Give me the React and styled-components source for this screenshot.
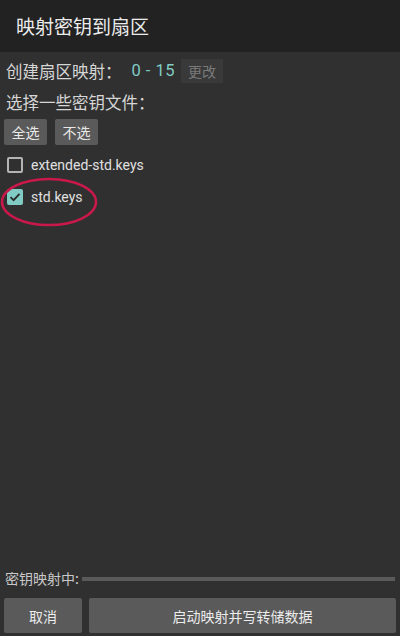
import React from "react";
import styled, { createGlobalStyle } from "styled-components";

const Global = createGlobalStyle`
  html, body { margin: 0; padding: 0; background: #303030; }
  body { font-family: "Noto Sans CJK SC", "Noto Sans", Roboto, sans-serif; }
  * { box-sizing: border-box; }
`;

const Screen = styled.div`
  width: 400px;
  height: 636px;
  display: flex;
  flex-direction: column;
  background: #303030;
  color: #d6d6d6;
`;

const Header = styled.div`
  height: 52px;
  flex-shrink: 0;
  background: #222222;
  display: flex;
  align-items: center;
  padding: 0 0 2px 16px;
  font-size: 19px;
  color: #ececec;
`;

const Body = styled.div`
  flex: 1;
  display: flex;
  flex-direction: column;
  padding: 7px 4px 0 6px;
`;

const Line = styled.div`
  display: flex;
  align-items: center;
  height: ${(p) => p.$h || 24}px;
  margin-top: ${(p) => p.$mt || 0}px;
  font-size: 16.5px;
  line-height: 1;
`;

const Accent = styled.span`
  color: #80cbc4;
  margin-left: 10px;
  font-family: Roboto, "Noto Sans", sans-serif;
  letter-spacing: 0.5px;
`;

const GhostBtn = styled.span`
  margin-left: 6px;
  width: 42px;
  height: 24px;
  display: flex;
  align-items: center;
  justify-content: center;
  background: #393939;
  color: #7a7a7a;
  font-size: 14px;
`;

const BtnRow = styled.div`
  display: flex;
  gap: 8px;
  margin-top: 5px;
  margin-left: -2px;
`;

const SmallBtn = styled.button`
  width: 43px;
  height: 26px;
  border: none;
  border-radius: 2px;
  background: #5a5a5a;
  color: #e8e8e8;
  font-family: inherit;
  font-size: 14px;
  padding: 0;
`;

const List = styled.div`
  display: flex;
  flex-direction: column;
  margin-top: 4px;
`;

const Item = styled.div`
  position: relative;
  display: flex;
  align-items: center;
  height: 32px;
  padding-left: 1px;
  font-family: Roboto, "Noto Sans", sans-serif;
  font-size: 14px;
  color: #e0e0e0;
`;

const Box = styled.span`
  width: 16px;
  height: 16px;
  border-radius: 2px;
  margin-right: 8px;
  display: flex;
  align-items: center;
  justify-content: center;
  border: ${(p) => (p.$checked ? "none" : "2px solid #b4b4b4")};
  background: ${(p) => (p.$checked ? "#80cbc4" : "transparent")};
`;

const Ring = styled.svg`
  position: absolute;
  left: -7px;
  top: -4px;
  pointer-events: none;
`;

const Spacer = styled.div`
  flex: 1;
`;

const Status = styled.div`
  display: flex;
  align-items: center;
  font-size: 14px;
  color: #c8c8c8;
  padding: 0 5px 0 5px;
  height: 16px;
`;

const Track = styled.div`
  flex: 1;
  height: 4px;
  margin-left: 3px;
  margin-top: 1px;
  background: #5a5a5a;
`;

const Footer = styled.div`
  display: flex;
  gap: 7px;
  padding: 12px 4px 3px 4px;
`;

const BigBtn = styled.button`
  flex: ${(p) => (p.$grow ? 1 : "none")};
  width: ${(p) => (p.$grow ? "auto" : "78px")};
  height: 35px;
  border: none;
  border-radius: 2px;
  background: #5a5a5a;
  color: #ececec;
  font-family: inherit;
  font-size: 14px;
  padding: 0;
`;

export default function App() {
  return (
    <>
      <Global />
      <Screen>
        <Header>映射密钥到扇区</Header>
        <Body>
          <Line $h={24}>
            创建扇区映射：<Accent>0 - 15</Accent>
            <GhostBtn>更改</GhostBtn>
          </Line>
          <Line $h={24} $mt={7}>选择一些密钥文件：</Line>
          <BtnRow>
            <SmallBtn>全选</SmallBtn>
            <SmallBtn>不选</SmallBtn>
          </BtnRow>
          <List>
            <Item>
              <Box />
              extended-std.keys
            </Item>
            <Item>
              <Box $checked>
                <svg width="12" height="12" viewBox="0 0 12 12">
                  <path d="M1.5 6.2 L4.6 9.2 L10.5 2.8" fill="none" stroke="#2a2a2a" strokeWidth="1.8" />
                </svg>
              </Box>
              std.keys
              <Ring width="104" height="52" viewBox="0 0 104 52">
                <ellipse cx="50" cy="25" rx="47" ry="23" fill="none" stroke="#c9184a" strokeWidth="2.5" />
              </Ring>
            </Item>
          </List>
          <Spacer />
        </Body>
        <Status>
          密钥映射中:
          <Track />
        </Status>
        <Footer>
          <BigBtn>取消</BigBtn>
          <BigBtn $grow>启动映射并写转储数据</BigBtn>
        </Footer>
      </Screen>
    </>
  );
}
